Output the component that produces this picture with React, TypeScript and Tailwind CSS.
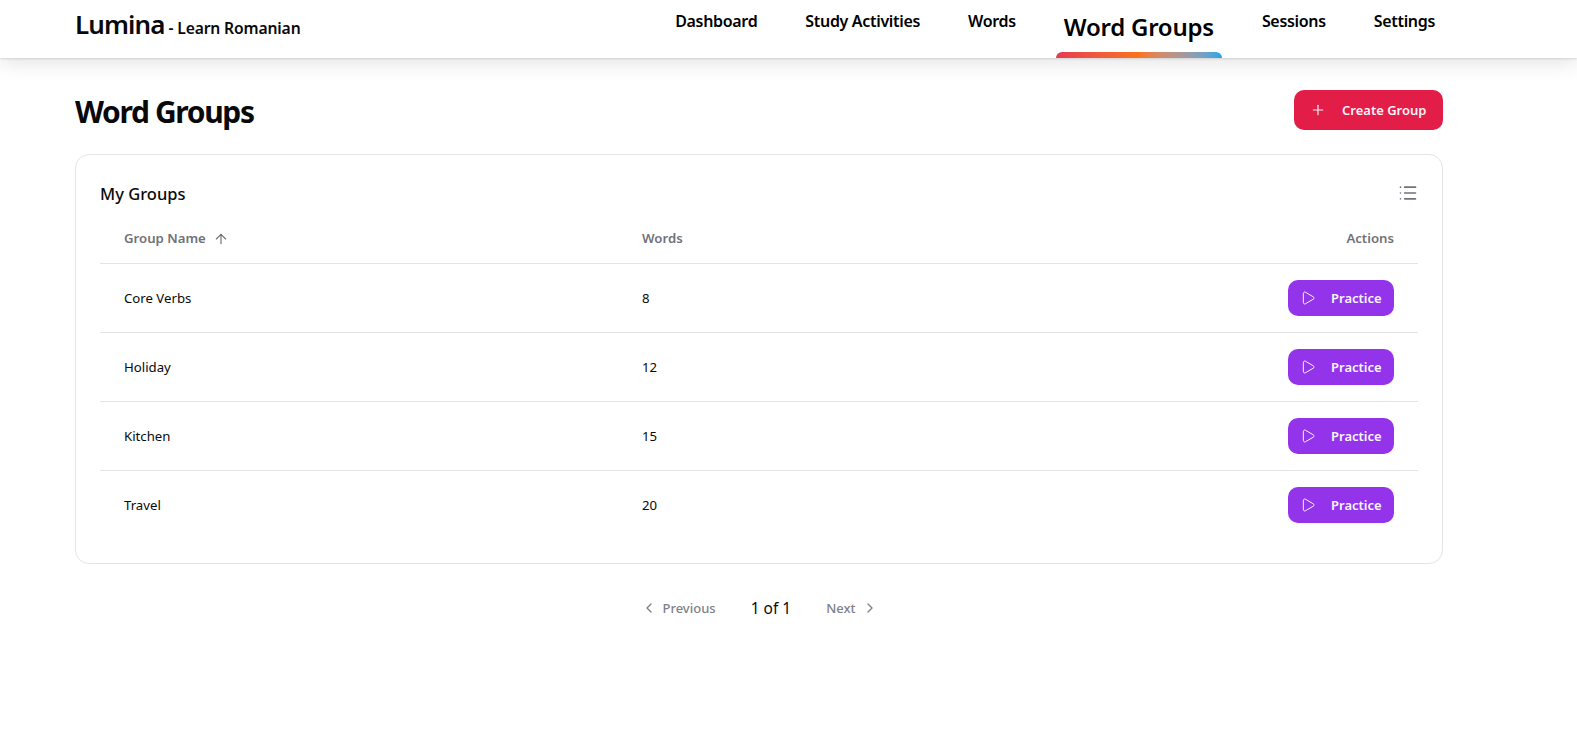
import { ArrowUp, ChevronLeft, ChevronRight, List, Play, Plus } from "lucide-react";

const nav = ["Dashboard", "Study Activities", "Words", "Word Groups", "Sessions", "Settings"];
const rows = [
  ["Core Verbs", "8"],
  ["Holiday", "12"],
  ["Kitchen", "15"],
  ["Travel", "20"],
];

export default function App() {
  return (
    <div className="min-h-[735px] bg-white text-[#09090b] font-['Noto_Sans','Open_Sans',sans-serif]">
      <header className="h-[58px] bg-white shadow-[0_1px_2px_rgba(0,0,0,0.12),0_6px_20px_rgba(0,0,0,0.1)] pl-[75px] pr-[134px] flex justify-between">
        <div className="flex items-baseline pt-[6px] gap-[4px] font-semibold">
          <span className="text-[26px] leading-[36px] tracking-[-0.035em]">Lumina</span>
          <span className="text-[15.7px] tracking-[-0.01em]">- Learn Romanian</span>
        </div>
        <nav className="flex gap-8">
          {nav.map((n) =>
            n === "Word Groups" ? (
              <a key={n} className="relative h-[58px] px-2 pt-[9px] text-[24px] leading-[36px] font-semibold tracking-[-0.01em] text-black">
                {n}
                <span className="absolute left-0 right-0 bottom-0 h-[6px] rounded-t-[6px] bg-gradient-to-r from-[#e63950] via-[#f97316] to-[#0ea5e9]" />
              </a>
            ) : (
              <a key={n} className="px-2 pt-[9px] text-[16px] leading-[24px] font-semibold tracking-[-0.02em] text-black">
                {n}
              </a>
            )
          )}
        </nav>
      </header>

      <main className="pl-[75px] pr-[134px] pt-[32px]">
        <div className="flex items-center justify-between h-[40px]">
          <h1 className="pt-[3px] text-[30px] font-bold tracking-[-0.045em] leading-[44px]">Word Groups</h1>
          <button className="w-[149px] h-[40px] rounded-[10px] bg-[#e11d48] text-[#fdf2f8] flex items-center pl-[16px] gap-[16px] text-[13px] font-semibold">
            <Plus size={16} strokeWidth={1.75} />
            <span className="pt-[1px]">Create Group</span>
          </button>
        </div>

        <section className="mt-[24px] h-[410px] rounded-[14px] border border-[#e4e4e7] px-[24px] pt-[24px]">
          <div className="flex items-center justify-between h-[30px]">
            <h2 className="text-[16.5px] font-medium">My Groups</h2>
            <List size={20} strokeWidth={2} className="text-[#71717a] -mt-[2px]" />
          </div>
          <table className="w-full text-[13.2px] border-collapse mt-[1px]">
            <thead>
              <tr className="h-[53px] border-b border-[#e4e4e7] text-[#71717a]">
                <th className="w-[518px] text-left font-semibold pl-[24px] pt-[6px] text-[13.2px]">
                  <span className="flex items-center gap-[7px]">
                    Group Name <ArrowUp size={16} strokeWidth={1.75} />
                  </span>
                </th>
                <th className="text-left font-semibold pl-[24px] pt-[6px] text-[13.2px]">Words</th>
                <th className="text-right font-semibold pr-[24px] pt-[6px] text-[13.2px]">Actions</th>
              </tr>
            </thead>
            <tbody>
              {rows.map(([name, count], i) => (
                <tr key={name} className={`h-[69px] ${i < 3 ? "border-b border-[#e4e4e7]" : ""}`}>
                  <td className="pl-[24px] pt-[2px]">{name}</td>
                  <td className="pl-[24px] pt-[2px]">{count}</td>
                  <td className="pr-[24px]">
                    <button className="ml-auto w-[106px] h-[36px] rounded-[10px] bg-[#9333ea] text-[#faf5ff] flex items-center pl-[12px] gap-[15px] font-semibold text-[13px]">
                      <Play size={16} strokeWidth={1.5} />
                      <span className="pt-[2px]">Practice</span>
                    </button>
                  </td>
                </tr>
              ))}
            </tbody>
          </table>
        </section>

        <div className="mt-[32px] flex items-center justify-center gap-[35px] h-[24px] text-[#808088] text-[13px] font-medium">
          <span className="flex items-center gap-[6px]">
            <ChevronLeft size={16} />
            <span className="pt-[1px]">Previous</span>
          </span>
          <span className="pt-[1px] text-[15.5px] text-[#09090b] font-normal">1 of 1</span>
          <span className="flex items-center gap-[6px]">
            <span className="pt-[1px]">Next</span>
            <ChevronRight size={16} />
          </span>
        </div>
      </main>
    </div>
  );
}
